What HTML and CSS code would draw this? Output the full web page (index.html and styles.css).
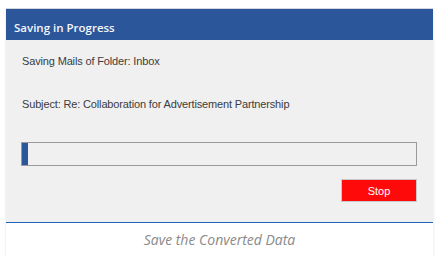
FILE: index.html
```html
<!doctype html>
<html lang="en">
<head>
    <meta charset="UTF-8">
    <title>Saving in Progress</title>
    <link rel="stylesheet" href="styles.css">
</head>
<body>

<div class="dialog">
    <div class="title-bar">Saving in Progress</div>
    <div class="content">
        <div class="line folder">Saving Mails of Folder: Inbox</div>
        <div class="line subject">Subject: Re: Collaboration for Advertisement Partnership</div>
        <div class="progress">
            <div class="progress-fill" style="width: 6px;"></div>
        </div>
        <div class="actions">
            <button class="stop-btn">Stop</button>
        </div>
    </div>
    <div class="caption">Save the Converted Data</div>
</div>

</body>
</html>
```

FILE: styles.css
```css
body {
    margin: 0;
    background: #ffffff;
    font-family: "Liberation Sans", Arial, sans-serif;
}
.dialog {
    width: 427px;
    margin: 8px 0 0 6px;
    border-top: 1px solid #d4d8de;
    box-shadow: 0 2px 3px rgba(0, 0, 0, 0.12);
}
.title-bar {
    height: 31px;
    box-sizing: border-box;
    display: flex;
    align-items: flex-end;
    padding: 0 0 5px 8px;
    background: #2b579a;
    color: #f4f6fa;
    font-family: "Open Sans", sans-serif;
    font-size: 11.5px;
    font-weight: 600;
}
.content {
    background: #f0f0f0;
    padding: 15px 16px 20px 15px;
    border-bottom: 1px solid #1f63b8;
}
.line {
    font-size: 11px;
    letter-spacing: -0.15px;
    color: #3c3c3c;
    padding-left: 1px;
}
.subject {
    margin-top: 31px;
}
.progress {
    margin-top: 32px;
    height: 22px;
    border: 1px solid #9a9a9a;
    background: #f0f0f0;
    display: flex;
}
.progress-fill {
    background: #2b579a;
    height: 100%;
}
.actions {
    display: flex;
    justify-content: flex-end;
    margin-top: 13px;
}
.stop-btn {
    width: 76px;
    height: 23px;
    background: #ff0a0a;
    border: 1px solid #c8c8c8;
    color: #ffffff;
    font-family: "Liberation Sans", Arial, sans-serif;
    font-size: 11px;
    padding: 0;
}
.caption {
    height: 33px;
    line-height: 33px;
    background: #ffffff;
    text-align: center;
    font-family: "Open Sans", sans-serif;
    font-style: italic;
    font-size: 14px;
    color: #8a8a8a;
}
```
